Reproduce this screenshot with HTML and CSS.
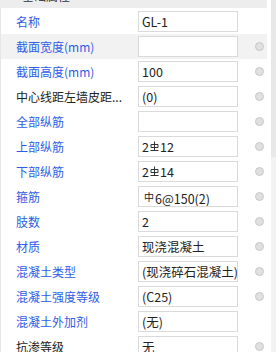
FILE: index.html
```html
<!DOCTYPE html>
<html>
<head>
<title>属性</title>
<link rel="stylesheet" href="styles.css">
</head>
<body>
<div class="wrap">
<div class="panel">
<div class="group-title">基础属性</div>
<div class="rows">
<div class="row"><span class="label link">名称</span><span class="value">GL-1</span><span class="pin"></span></div>
<div class="row hover"><span class="label link">截面宽度(mm)</span><span class="value"></span><span class="pin on"></span></div>
<div class="row"><span class="label link">截面高度(mm)</span><span class="value">100</span><span class="pin on"></span></div>
<div class="row"><span class="label">中心线距左墙皮距...</span><span class="value">(0)</span><span class="pin on"></span></div>
<div class="row"><span class="label link">全部纵筋</span><span class="value"></span><span class="pin on"></span></div>
<div class="row"><span class="label link">上部纵筋</span><span class="value">2<svg class="bar" width="9" height="10" viewBox="0 0 9 10"><path d="M1 3.5h7v3H1z M4.5 0.5v9 M0.5 9.5h8" fill="none" stroke="#333" stroke-width="1"/></svg>12</span><span class="pin on"></span></div>
<div class="row"><span class="label link">下部纵筋</span><span class="value">2<svg class="bar" width="9" height="10" viewBox="0 0 9 10"><path d="M1 3.5h7v3H1z M4.5 0.5v9 M0.5 9.5h8" fill="none" stroke="#333" stroke-width="1"/></svg>14</span><span class="pin on"></span></div>
<div class="row"><span class="label link">箍筋</span><span class="value"><span class="small">中</span>6@150(2)</span><span class="pin on"></span></div>
<div class="row"><span class="label link">肢数</span><span class="value">2</span><span class="pin on"></span></div>
<div class="row"><span class="label link">材质</span><span class="value">现浇混凝土</span><span class="pin on"></span></div>
<div class="row"><span class="label link">混凝土类型</span><span class="value">(现浇碎石混凝土)</span><span class="pin on"></span></div>
<div class="row"><span class="label link">混凝土强度等级</span><span class="value">(C25)</span><span class="pin on"></span></div>
<div class="row"><span class="label link">混凝土外加剂</span><span class="value">(无)</span><span class="pin"></span></div>
<div class="row"><span class="label">抗渗等级</span><span class="value">无</span><span class="pin on"></span></div>
</div>
</div>
<div class="scrollbar"><div class="thumb"></div></div>
</div>
</body>
</html>
```
FILE: styles.css
```css
html, body {
    margin: 0;
    padding: 0;
    height: 352px;
    overflow: hidden;
    background: #fff;
}
body {
    font-family: "Noto Sans CJK SC", "Liberation Sans", sans-serif;
    font-size: 12px;
    color: #222;
}
.wrap {
    display: flex;
    height: 352px;
}
.panel {
    width: 267px;
    margin-top: -16px;
}
.group-title {
    height: 24px;
    line-height: 24px;
    padding-left: 22px;
    background-color: #ededed;
    color: #333;
}
.rows {
    border-left: 1px solid #e6e6e6;
    padding-top: 1px;
}
.row {
    display: flex;
    align-items: center;
    height: 25px;
}
.row.hover {
    background-color: #f2f2f2;
}
.label {
    width: 122px;
    padding-left: 15px;
    white-space: nowrap;
    overflow: hidden;
    font-size: 12px;
}
.label.link {
    color: #2f5de6;
}
.value {
    box-sizing: border-box;
    width: 100px;
    height: 21px;
    line-height: 19px;
    border: 1px solid #dadada;
    background: #fff;
    padding-left: 3px;
    font-size: 12.5px;
    color: #222;
    white-space: nowrap;
    overflow: hidden;
}
.bar {
    vertical-align: 1px;
    margin: 0 1px;
}
.small {
    font-size: 10px;
    vertical-align: 3px;
    margin: 0 1px 0 2px;
}
.pin {
    width: 7px;
    height: 7px;
    margin-left: 17px;
    border-radius: 50%;
}
.pin.on {
    background-color: #e0e0e0;
    border: 1px solid #c8c8c8;
}
.scrollbar {
    margin-left: 4px;
    width: 5px;
    background-color: #f2f2f2;
}
.thumb {
    height: 157px;
    background-color: #e8e8e8;
}
```
